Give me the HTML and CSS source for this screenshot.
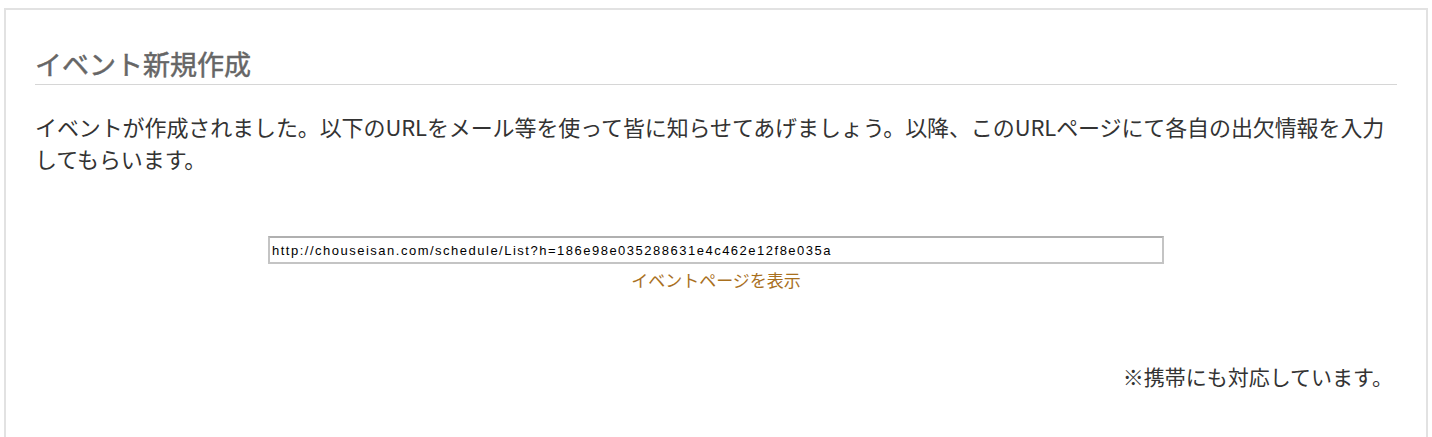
FILE: index.html
```html
<!DOCTYPE html>
<html lang="ja">
<head>
    <meta charset="UTF-8">
    <meta name="viewport" content="width=device-width, initial-scale=1.0">
    <title>イベント新規作成</title>
    <link rel="stylesheet" href="styles.css">
</head>
<body>
    <div class="panel">
        <h2 class="panel-title">イベント新規作成</h2>

        <p class="message">イベントが作成されました。以下のURLをメール等を使って皆に知らせてあげましょう。以降、このURLページにて各自の出欠情報を入力してもらいます。</p>

        <div class="url-box">
            <input id="eventUrl" class="url-input" type="text" value="http://chouseisan.com/schedule/List?h=186e98e035288631e4c462e12f8e035a" readonly>
            <a class="event-link" href="#">イベントページを表示</a>
        </div>

        <p class="mobile-note">※携帯にも対応しています。</p>
    </div>
</body>
</html>
```

FILE: styles.css
```css
html, body {
    height: 100%;
}

body {
    font-family: "Noto Sans CJK JP", "Noto Sans", sans-serif;
    background-color: #fff;
    color: #333;
    margin: 0;
    overflow: hidden;
}

.panel {
    box-sizing: border-box;
    height: calc(100% - 8px);
    margin: 8px 4px 0;
    padding: 0 29px;
    border: 2px solid #e2e2e2;
    border-bottom: none;
}

.panel-title {
    margin: 38px 0 0;
    padding-bottom: 4px;
    font-size: 27px;
    line-height: 32px;
    font-weight: normal;
    color: #666;
    -webkit-text-stroke: 0.5px #666;
    border-bottom: 1px solid #d6d6d6;
}

.message {
    margin: 25px 0 0;
    font-size: 22px;
    line-height: 32px;
    letter-spacing: -0.1px;
}

.url-box {
    display: flex;
    flex-direction: column;
    align-items: center;
    margin-top: 62px;
}

.url-input {
    box-sizing: border-box;
    width: 896px;
    height: 28px;
    padding: 0 2px;
    border: 2px solid #c4c4c4;
    border-top-color: #b0b0b0;
    font-family: "Liberation Sans", Arial, sans-serif;
    font-size: 13px;
    letter-spacing: 1.5px;
    color: #000;
    outline: none;
}

.event-link {
    margin-top: 6px;
    font-size: 17px;
    line-height: 20px;
    color: #a9701e;
    text-decoration: none;
}

.mobile-note {
    margin: 70px 0 0;
    text-align: right;
    font-size: 21px;
    line-height: 32px;
    padding-right: 4px;
}
```
